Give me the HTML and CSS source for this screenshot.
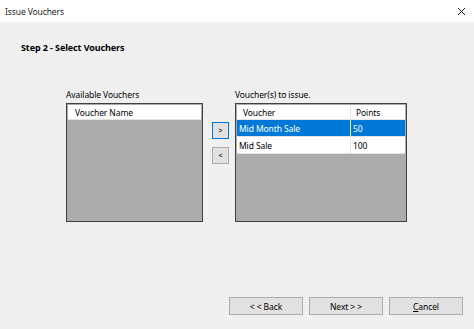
FILE: index.html
```html
<!DOCTYPE html>
<html lang="en">
<head>
    <meta charset="UTF-8">
    <title>Issue Vouchers</title>
    <link rel="stylesheet" href="styles.css">
</head>
<body>

<div class="titlebar">
    <span class="title">Issue Vouchers</span>
    <svg class="close" width="9" height="9" viewBox="0 0 9 9">
        <path d="M1 1 L8 8 M8 1 L1 8" stroke="#222" stroke-width="1" fill="none"/>
    </svg>
</div>

<div class="step">Step 2 - Select Vouchers</div>

<div class="panels">
    <div class="group group-left">
        <div class="group-label">Available Vouchers</div>
        <div class="list">
            <div class="row header">
                <div class="cell cell-name">Voucher Name</div>
            </div>
        </div>
    </div>

    <div class="move-buttons">
        <button class="move-button focused">&gt;</button>
        <button class="move-button">&lt;</button>
    </div>

    <div class="group group-right">
        <div class="group-label">Voucher(s) to issue.</div>
        <div class="list">
            <div class="row header">
                <div class="cell cell-voucher">Voucher</div>
                <div class="cell cell-points">Points</div>
            </div>
            <div class="row selected">
                <div class="cell cell-voucher">Mid Month Sale</div>
                <div class="cell cell-points">50</div>
            </div>
            <div class="row">
                <div class="cell cell-voucher">Mid Sale</div>
                <div class="cell cell-points">100</div>
            </div>
        </div>
    </div>
</div>

<div class="footer">
    <button class="wizard-button">&lt; &lt; Back</button>
    <button class="wizard-button">Next &gt; &gt;</button>
    <button class="wizard-button"><u>C</u>ancel</button>
</div>

</body>
</html>
```

FILE: styles.css
```css
body {
    font-family: "Noto Sans", "Open Sans", sans-serif;
    font-size: 8.5px;
    letter-spacing: -0.1px;
    color: #000;
    background-color: #f0f0f0;
    margin: 0;
    height: 100vh;
    display: flex;
    flex-direction: column;
}

.titlebar {
    height: 22px;
    background-color: #fff;
    display: flex;
    align-items: center;
    justify-content: space-between;
    padding: 0 8px 0 5px;
}

.title {
    color: #222;
}

.step {
    margin: 19px 0 0 21px;
    font-weight: bold;
    font-size: 9px;
    line-height: 14px;
}

.panels {
    display: flex;
    align-items: flex-start;
    margin: 34px 0 0 66px;
}

.group-label {
    line-height: 12px;
    margin-bottom: 2px;
    white-space: nowrap;
}

.group-left {
    width: 137px;
}

.group-right {
    width: 172px;
}

.list {
    height: 119px;
    border: 1px solid #404040;
    padding: 1px;
    box-sizing: border-box;
    background-color: #ababab;
}

.row {
    display: flex;
    height: 16px;
    background-color: #fff;
    border-bottom: 1px solid #e3e3e3;
}

.row.header {
    height: 14px;
}

.row.selected {
    background-color: #0078d7;
    color: #fff;
}

.cell {
    display: flex;
    align-items: center;
    box-sizing: border-box;
    padding-left: 2px;
    white-space: nowrap;
}

.header .cell {
    padding-left: 6px;
}

.header .cell-name {
    flex: 1;
    padding-left: 7px;
}

.cell-voucher {
    width: 114px;
    border-right: 1px solid #e3e3e3;
}

.cell-points {
    flex: 1;
}

.header .cell-points {
    padding-left: 5px;
}

.move-buttons {
    display: flex;
    flex-direction: column;
    gap: 8px;
    margin: 33px 6px 0 9px;
}

.move-button {
    width: 17px;
    height: 17px;
    padding: 0;
    font-family: inherit;
    font-size: 7px;
    background-color: #e1e1e1;
    border: 1px solid #adadad;
}

.move-button.focused {
    border-color: #0078d7;
}

.footer {
    margin-top: auto;
    display: flex;
    justify-content: flex-end;
    gap: 6px;
    padding: 0 11px 14px 0;
}

.wizard-button {
    width: 74px;
    height: 18px;
    padding: 0;
    font-family: inherit;
    font-size: 8.5px;
    letter-spacing: -0.1px;
    color: #000;
    background-color: #e1e1e1;
    border: 1px solid #adadad;
}
```
